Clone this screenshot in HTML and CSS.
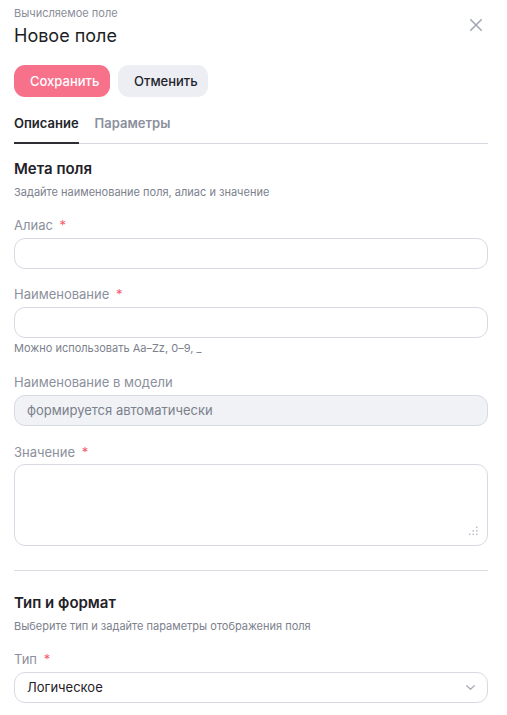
FILE: index.html
```html
<!DOCTYPE html>
<html lang="ru">
<head>
<meta charset="utf-8">
<title>Новое поле</title>
<link rel="stylesheet" href="styles.css">
</head>
<body>
<div class="panel">
  <header class="head">
    <div class="head-text">
      <div class="eyebrow">Вычисляемое поле</div>
      <h1 class="title">Новое поле</h1>
    </div>
    <button class="close" aria-label="Закрыть">
      <svg width="12" height="12" viewBox="0 0 12 12"><path d="M0.75 0.75 L11.25 11.25 M11.25 0.75 L0.75 11.25" stroke="#a4a8b6" stroke-width="1.6" stroke-linecap="round" fill="none"/></svg>
    </button>
  </header>

  <div class="actions">
    <button class="btn btn-primary">Сохранить</button>
    <button class="btn btn-secondary">Отменить</button>
  </div>

  <nav class="tabs">
    <div class="tab active">Описание</div>
    <div class="tab">Параметры</div>
  </nav>

  <section class="section">
    <h2 class="section-title">Мета поля</h2>
    <p class="section-sub">Задайте наименование поля, алиас и значение</p>

    <div class="field">
      <label class="label">Алиас <span class="req">*</span></label>
      <div class="input"></div>
    </div>

    <div class="field">
      <label class="label">Наименование <span class="req">*</span></label>
      <div class="input"></div>
      <div class="hint">Можно использовать Aa–Zz, 0–9, _</div>
    </div>

    <div class="field field-after-hint">
      <label class="label">Наименование в модели</label>
      <div class="input input-disabled">формируется автоматически</div>
    </div>

    <div class="field field-value">
      <label class="label">Значение <span class="req">*</span></label>
      <div class="input textarea">
        <svg class="grip" width="10" height="10" viewBox="0 0 10 10">
          <g fill="#b9bcc7">
            <rect x="0" y="7.6" width="1.5" height="1.5"/>
            <rect x="3.5" y="7.6" width="1.5" height="1.5"/>
            <rect x="7" y="7.6" width="1.5" height="1.5"/>
            <rect x="3.5" y="4.1" width="1.5" height="1.5"/>
            <rect x="7" y="4.1" width="1.5" height="1.5"/>
            <rect x="7" y="0.6" width="1.5" height="1.5"/>
          </g>
        </svg>
      </div>
    </div>
  </section>

  <hr class="divider">

  <section class="section section-2">
    <h2 class="section-title">Тип и формат</h2>
    <p class="section-sub">Выберите тип и задайте параметры отображения поля</p>

    <div class="field">
      <label class="label">Тип <span class="req">*</span></label>
      <div class="input select">
        <span>Логическое</span>
        <svg width="9" height="5" viewBox="0 0 9 5"><path d="M0.7 0.7 L4.5 4.2 L8.3 0.7" stroke="#a9acba" stroke-width="1.3" fill="none" stroke-linecap="round" stroke-linejoin="round"/></svg>
      </div>
    </div>
  </section>
</div>
</body>
</html>
```

FILE: styles.css
```css
* { box-sizing: border-box; }

html, body {
  margin: 0;
  padding: 0;
  background: #ffffff;
}

body {
  font-family: Inter, "Noto Sans", "Liberation Sans", sans-serif;
  color: #1f2128;
}

.panel {
  padding: 0 19px 0 14px;
}

.head {
  display: flex;
  justify-content: space-between;
  align-items: flex-start;
}

.eyebrow {
  margin-top: 6px;
  font-size: 11px;
  line-height: 14px;
  color: #8a8e99;
}

.title {
  margin: 4px 0 0;
  font-size: 18px;
  line-height: 24px;
  font-weight: 400;
  color: #1c1e24;
}

.close {
  margin-top: 13px;
  width: 24px;
  height: 24px;
  padding: 0;
  border: 0;
  background: transparent;
  display: flex;
  align-items: center;
  justify-content: center;
}

.actions {
  display: flex;
  gap: 8px;
  margin-top: 17px;
}

.btn {
  height: 32px;
  padding: 0 16px;
  border: 0;
  border-radius: 11px;
  font-family: inherit;
  font-size: 13px;
  font-weight: 500;
}

.btn-primary {
  background: #f7718b;
  color: #ffffff;
  width: 96px;
}

.btn-secondary {
  background: #eceef3;
  color: #22242b;
  width: 90px;
}

.tabs {
  display: flex;
  gap: 16px;
  margin-top: 18px;
  box-shadow: inset 0 -1px 0 #d5d8e0;
}

.tab {
  font-size: 13px;
  line-height: 16px;
  font-weight: 600;
  color: #8b909c;
  padding-bottom: 11px;
  border-bottom: 2px solid transparent;
}

.tab.active {
  color: #23252b;
  border-bottom-color: #2c2e33;
}

.section {
  margin-top: 15px;
}

.section-title {
  margin: 0;
  font-size: 15px;
  line-height: 20px;
  font-weight: 600;
  color: #1f2128;
}

.section-sub {
  margin: 6px 0 0;
  font-size: 11px;
  line-height: 14px;
  color: #7c818d;
}

.field {
  margin-top: 17px;
}

.section-sub + .field {
  margin-top: 18px;
}

.field-after-hint {
  margin-top: 19px;
}

.field-value {
  margin-top: 18px;
}

.label {
  display: block;
  font-size: 13px;
  line-height: 16px;
  color: #8b909c;
}

.req {
  color: #f45b70;
  margin-left: 3px;
}

.input {
  margin-top: 5px;
  height: 31px;
  border: 1px solid #d7dae2;
  border-radius: 11px;
  background: #ffffff;
  font-size: 13px;
  line-height: 29px;
  padding: 0 12px;
  color: #1f2128;
}

.input-disabled {
  background: #f0f2f6;
  color: #7b808b;
}

.textarea {
  position: relative;
  height: 82px;
  margin-top: 4px;
}

.grip {
  position: absolute;
  right: 8px;
  bottom: 9px;
}

.hint {
  margin-top: 3px;
  font-size: 11px;
  line-height: 14px;
  color: #7c818d;
}

.divider {
  margin: 24px 0 0;
  border: 0;
  height: 1px;
  background: #d9dce3;
}

.section-2 {
  margin-top: 22px;
}

.select {
  display: flex;
  align-items: center;
  justify-content: space-between;
  padding-right: 12px;
  margin-top: 5px;
}
```
